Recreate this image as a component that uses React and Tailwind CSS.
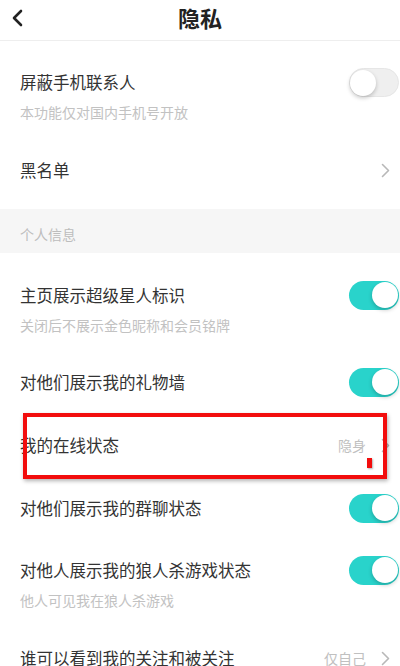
import React from "react";

const font = { fontFamily: '"Noto Sans CJK SC", "Noto Sans", sans-serif' };

const Chevron = () => (
  <svg width="9" height="15" viewBox="0 0 9 15" className="shrink-0">
    <polyline points="1.5,1.5 7.5,7.5 1.5,13.5" fill="none" stroke="#b8b8b8" strokeWidth="1.6" strokeLinecap="round" strokeLinejoin="round" />
  </svg>
);

const Toggle = ({ on }) => (
  <div
    className={`relative w-[50px] h-[29px] rounded-full shrink-0 ${
      on ? "bg-[#29d3cb]" : "bg-[#efefef] border border-[#e6e6e6]"
    }`}
  >
    <div
      className={`absolute top-[1.5px] w-[26px] h-[26px] rounded-full bg-white shadow-[0_2px_4px_rgba(0,0,0,0.22)] ${
        on ? "right-[1.5px]" : "left-[0px]"
      }`}
    />
  </div>
);

const Row = ({ title, sub, right, className }) => (
  <div className={`pl-[20px] ${className}`}>
    <div className="flex items-center justify-between h-[24px]">
      <span className="text-[16.5px] leading-[24px] text-[#333]">{title}</span>
      {right}
    </div>
    {sub && <div className="mt-[8px] text-[14px] leading-[20px] text-[#c2c2c2]">{sub}</div>}
  </div>
);

const Value = ({ text }) => (
  <div className="flex items-center pr-[10px]">
    <span className="text-[14px] text-[#c0c0c0] mr-[15px]">{text}</span>
    <Chevron />
  </div>
);

const Switch = ({ on }) => (
  <div className="pr-[1px]">
    <Toggle on={on} />
  </div>
);

export default function App() {
  return (
    <div className="relative w-[400px] h-[666px] overflow-hidden bg-white" style={font}>
      {/* header */}
      <div className="relative h-[41px] border-b border-[#eeeeee] flex justify-center">
        <svg width="14" height="20" viewBox="0 0 14 20" className="absolute left-[10px] top-[8px]">
          <polyline points="11,3 4,10 11,17" fill="none" stroke="#222" strokeWidth="2.6" strokeLinecap="round" strokeLinejoin="round" />
        </svg>
        <h1 className="pt-[3px] text-[22px] leading-[28px] font-bold text-[#222]">隐私</h1>
      </div>

      <Row className="pt-[29px] pb-[15px]" title="屏蔽手机联系人" sub="本功能仅对国内手机号开放" right={<Switch on={false} />} />
      <Row className="pt-[21px] pb-[27px]" title="黑名单" right={<div className="pr-[10px]"><Chevron /></div>} />

      <div className="h-[44px] bg-[#f6f6f6] pl-[20px] pt-[12px]">
        <span className="text-[14px] leading-[20px] text-[#bdbdbd]">个人信息</span>
      </div>

      <Row className="pt-[30px] pb-[15px]" title="主页展示超级星人标识" sub="关闭后不展示金色昵称和会员铭牌" right={<Switch on />} />
      <Row className="pt-[20px] pb-[19px]" title="对他们展示我的礼物墙" right={<Switch on />} />
      <Row className="pt-[20px] pb-[19px]" title="我的在线状态" right={<Value text="隐身" />} />
      <Row className="pt-[20px] pb-[19px]" title="对他们展示我的群聊状态" right={<Switch on />} />
      <Row className="pt-[19px] pb-[16px]" title="对他人展示我的狼人杀游戏状态" sub="他人可见我在狼人杀游戏" right={<Switch on />} />
      <Row className="pt-[20px] pb-[19px]" title="谁可以看到我的关注和被关注" right={<Value text="仅自己" />} />

      {/* annotation overlay */}
      <div className="absolute left-[23px] top-[413px] w-[364px] h-[66px] border-[4px] border-[#f20d0d] shadow-[1px_2px_4px_rgba(0,0,0,0.3)]" />
      <div className="absolute left-[367px] top-[458px] w-[5px] h-[10px] bg-[#f20d0d] shadow-[1px_1px_2px_rgba(0,0,0,0.3)]" />
    </div>
  );
}
